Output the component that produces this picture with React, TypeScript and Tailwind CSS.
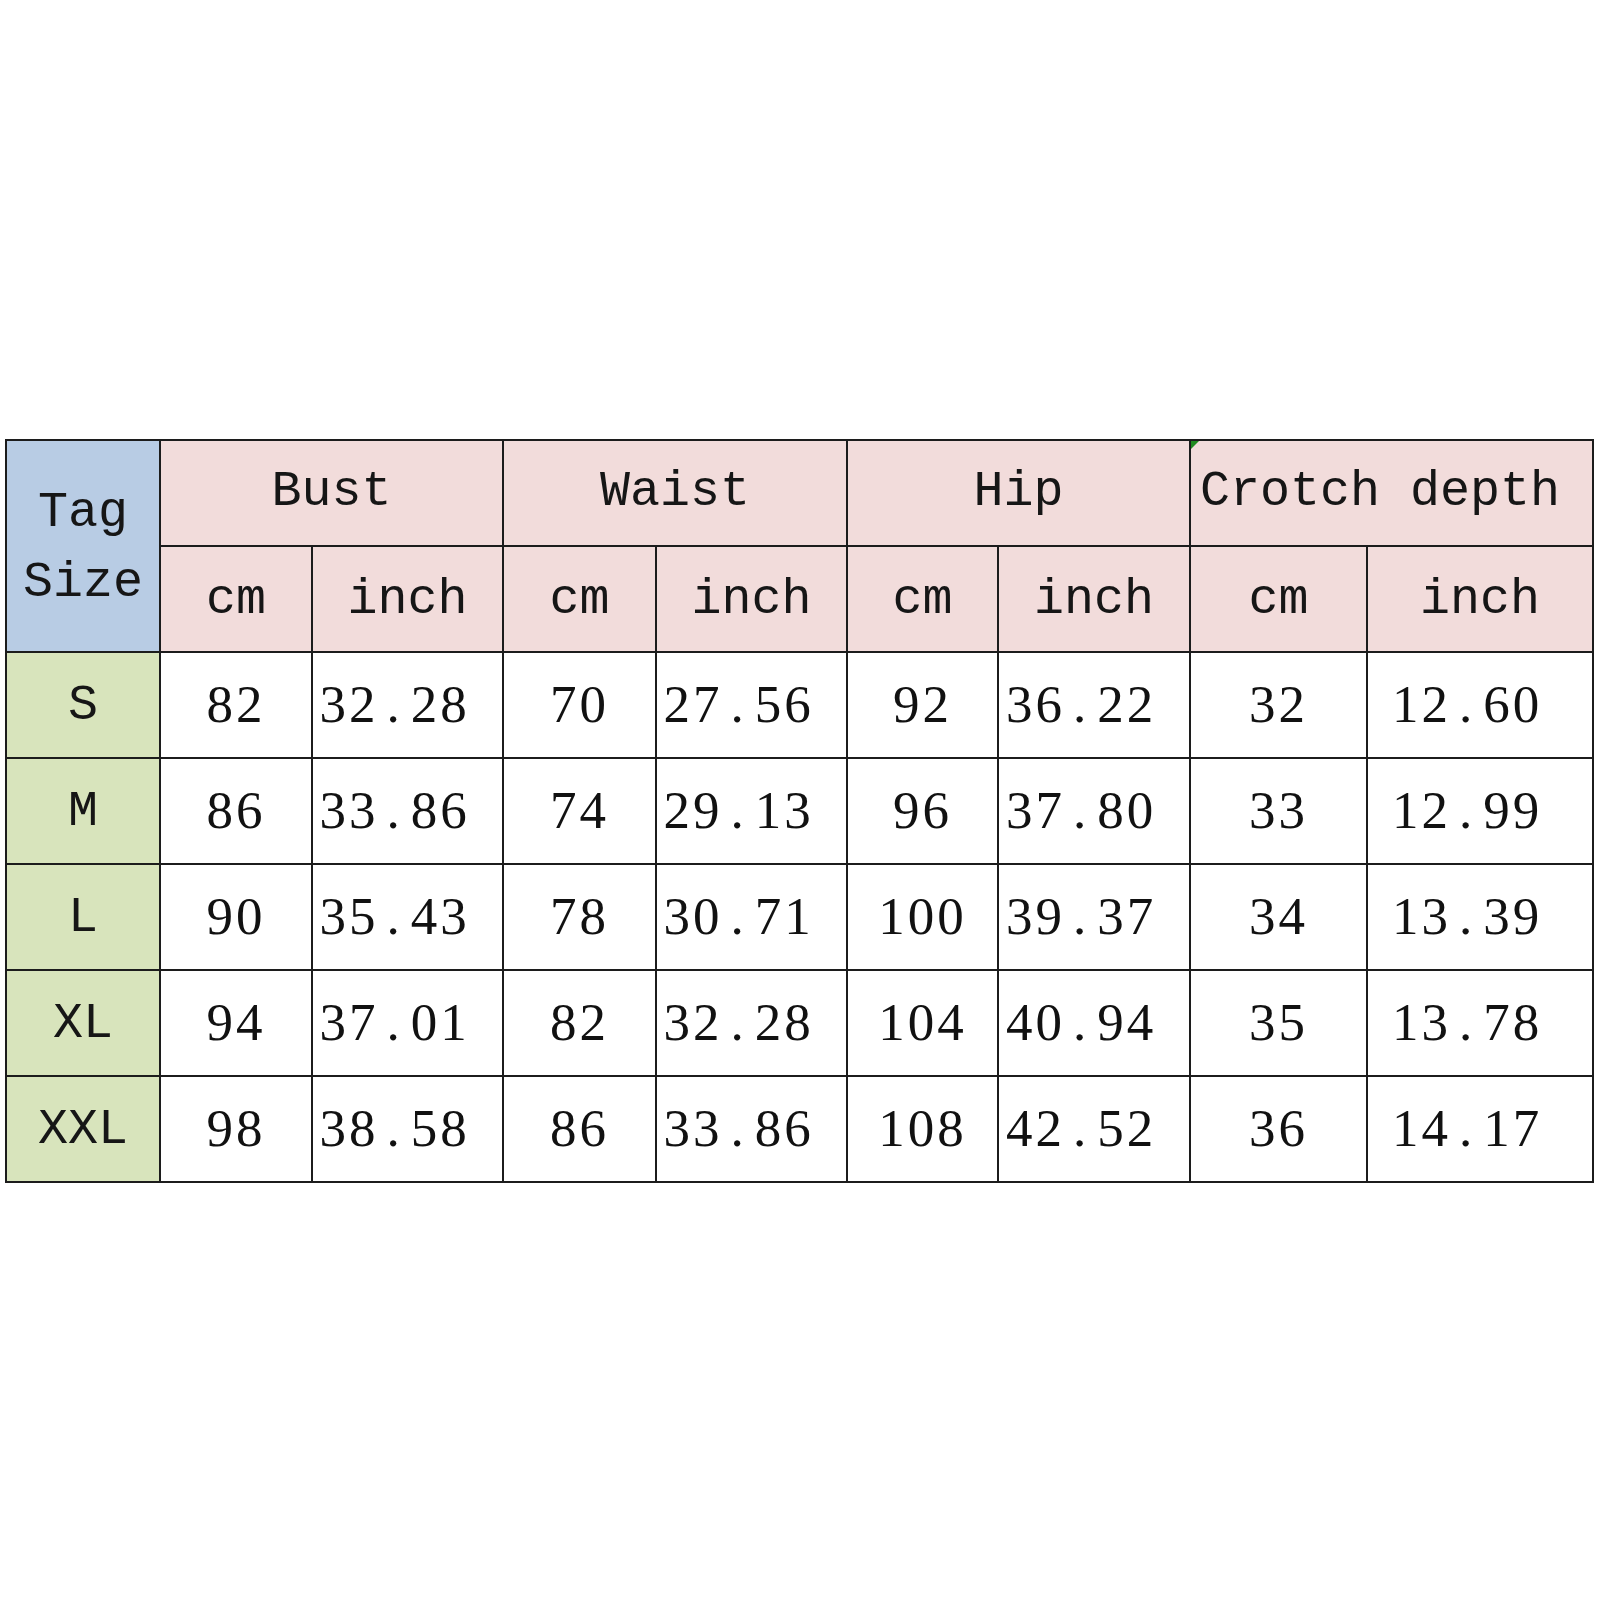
const rows = [
  { tag: "S", values: ["82", "32.28", "70", "27.56", "92", "36.22", "32", "12.60"] },
  { tag: "M", values: ["86", "33.86", "74", "29.13", "96", "37.80", "33", "12.99"] },
  { tag: "L", values: ["90", "35.43", "78", "30.71", "100", "39.37", "34", "13.39"] },
  { tag: "XL", values: ["94", "37.01", "82", "32.28", "104", "40.94", "35", "13.78"] },
  { tag: "XXL", values: ["98", "38.58", "86", "33.86", "108", "42.52", "36", "14.17"] },
] as const;

const groups = ["Bust", "Waist", "Hip"] as const;

const colWidths = [154, 152, 191, 153, 191, 151, 192, 177, 226];

const mono = "font-['Liberation_Mono','Courier_New',monospace] text-[50px] text-[#161616]";
const serif = "font-['Liberation_Serif','Times_New_Roman',serif] text-[53px] text-[#111] tracking-[3px]";
const cell = "border-2 border-[#1c1c1c] p-0 text-center align-middle";

function Measure({ value }: { value: string }) {
  const [whole, frac] = value.split(".");
  if (frac === undefined) return <>{value}</>;
  return (
    <>
      {whole}
      <span className="mx-[8px]">.</span>
      {frac}
    </>
  );
}

export default function App() {
  return (
    <div className="w-[1600px] h-[1600px] bg-white pt-[439px] pl-[5px]">
      <table className="table-fixed border-collapse w-[1589px]">
        <colgroup>
          {colWidths.map((w, i) => (
            <col key={i} style={{ width: w }} />
          ))}
        </colgroup>
        <thead>
          <tr className="h-[106px]">
            <th rowSpan={2} className={`${cell} ${mono} font-normal bg-[#b8cce4] leading-[70px] pt-[4px]`}>
              Tag
              <br />
              Size
            </th>
            {groups.map((g) => (
              <th key={g} colSpan={2} className={`${cell} ${mono} font-normal bg-[#f2dcdb] pb-[3px]`}>
                {g}
              </th>
            ))}
            <th colSpan={2} className={`${cell} ${mono} font-normal bg-[#f2dcdb] pb-[3px] text-left pl-[9px] relative whitespace-nowrap`}>
              <span className="absolute left-0 top-0 w-0 h-0 border-t-[8px] border-t-[#1f8a1f] border-r-[8px] border-r-transparent" />
              Crotch depth
            </th>
          </tr>
          <tr className="h-[106px]">
            {[0, 1, 2, 3].map((i) => (
              <>
                <th key={`cm${i}`} className={`${cell} ${mono} font-normal bg-[#f2dcdb]`}>
                  cm
                </th>
                <th key={`in${i}`} className={`${cell} ${mono} font-normal bg-[#f2dcdb]`}>
                  inch
                </th>
              </>
            ))}
          </tr>
        </thead>
        <tbody>
          {rows.map((r) => (
            <tr key={r.tag} className="h-[106px]">
              <td className={`${cell} ${mono} bg-[#d8e4bc]`}>{r.tag}</td>
              {r.values.map((v, i) => (
                <td
                  key={i}
                  className={`${cell} ${serif} bg-white ${i % 2 === 1 ? "pr-[26px]" : ""}`}
                >
                  <Measure value={v} />
                </td>
              ))}
            </tr>
          ))}
        </tbody>
      </table>
    </div>
  );
}
